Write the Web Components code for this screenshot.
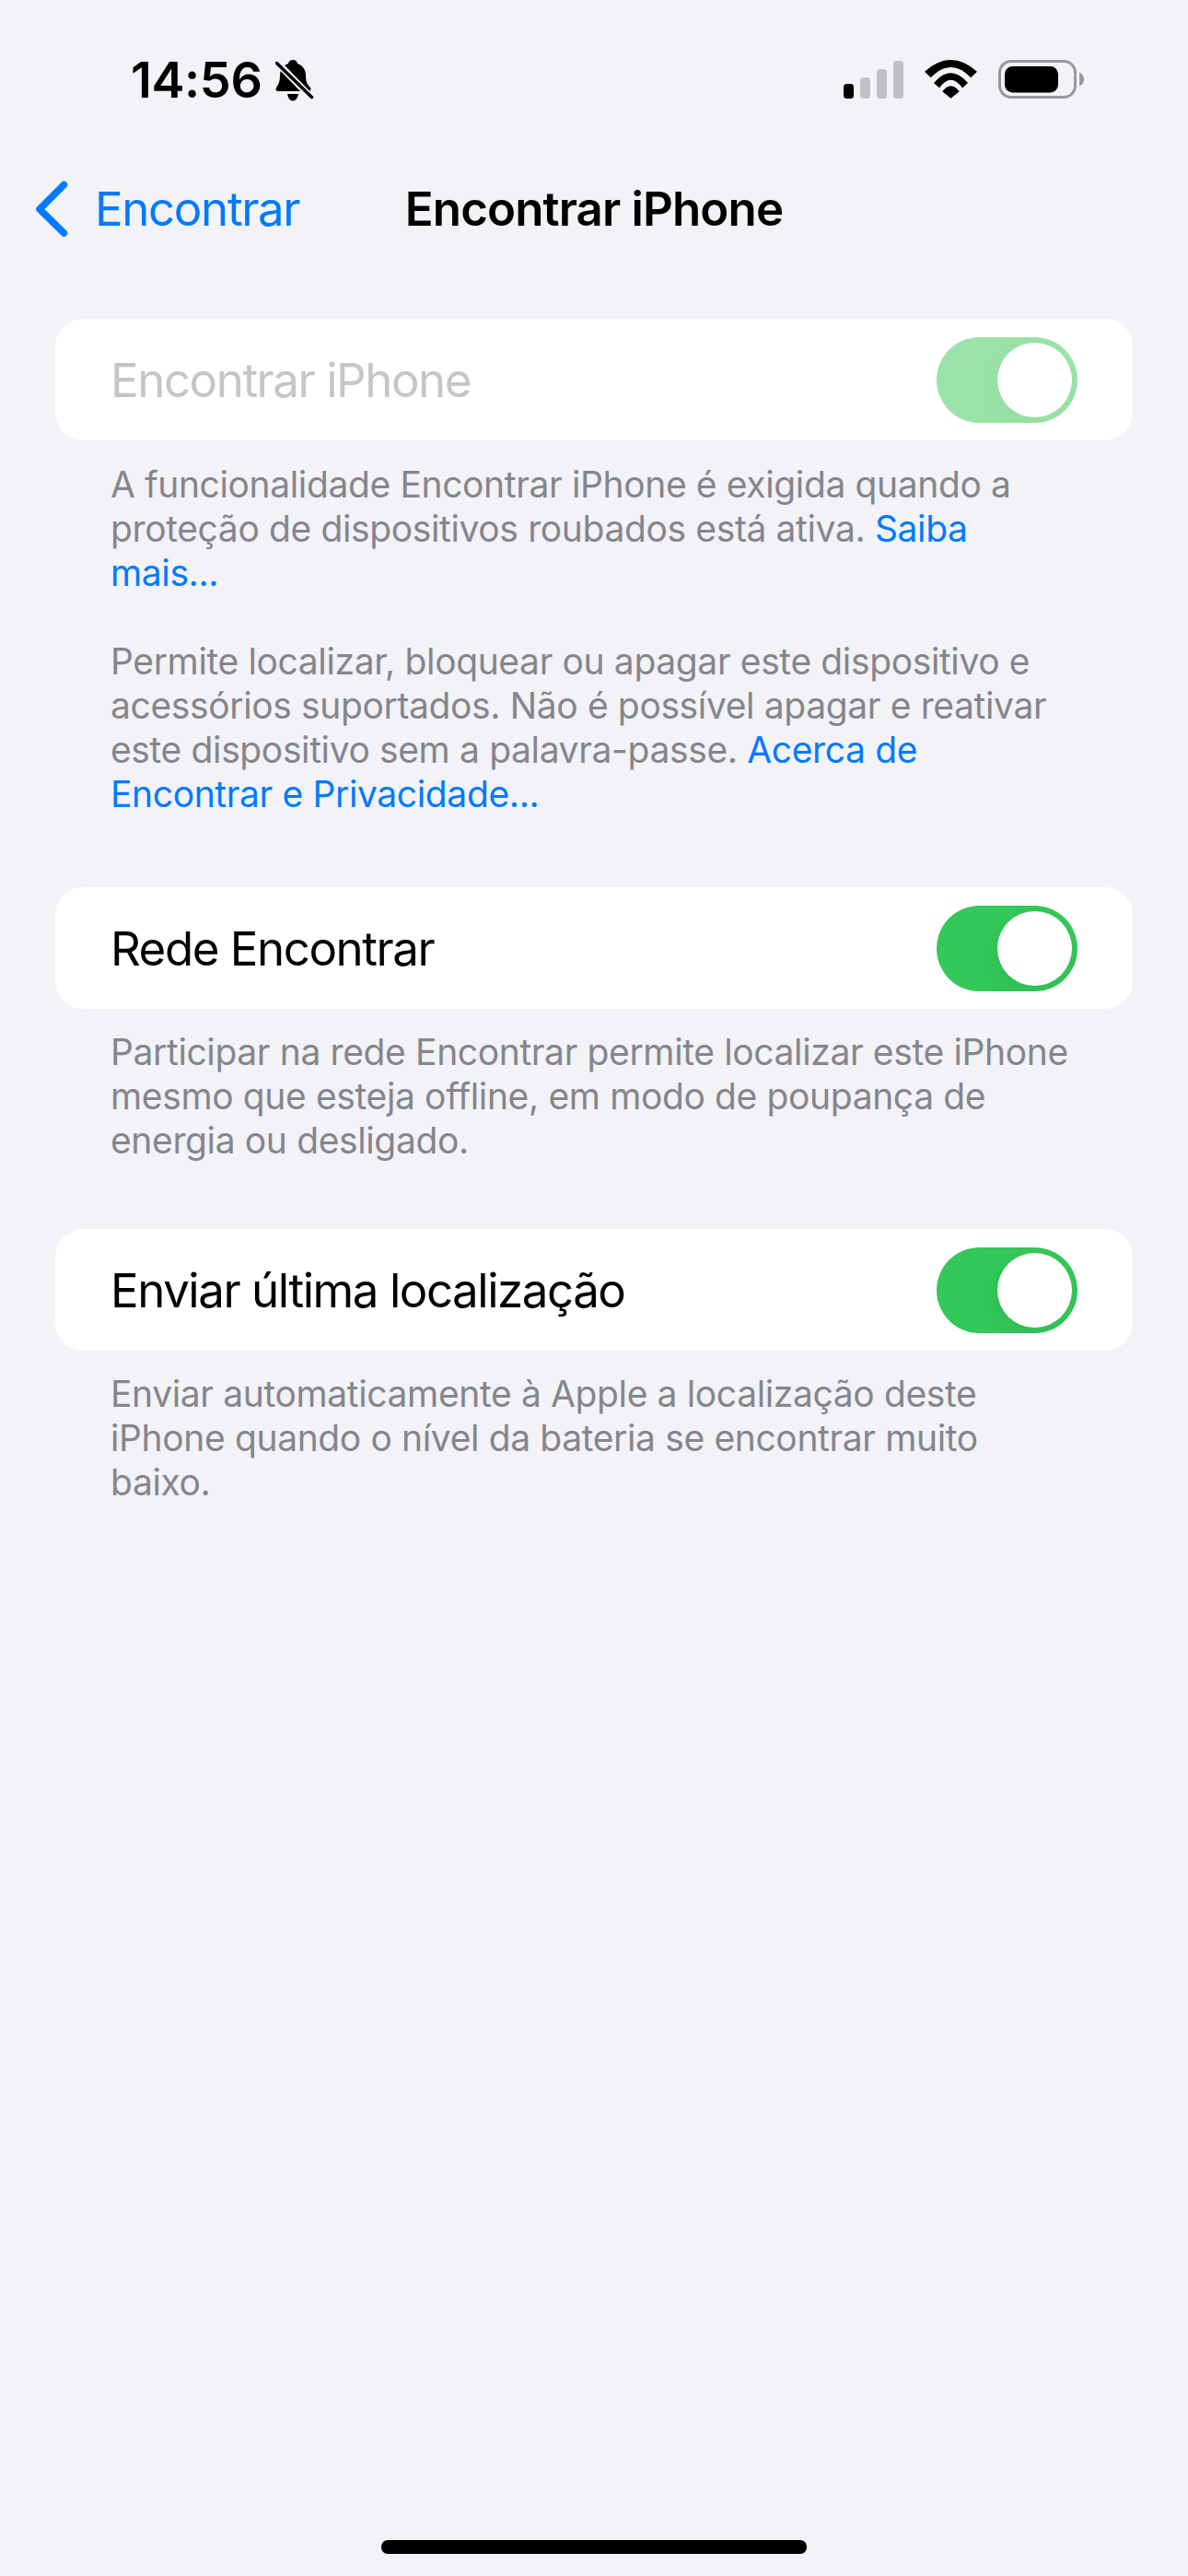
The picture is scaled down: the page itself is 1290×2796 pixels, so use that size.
<!DOCTYPE html>
<html lang="pt"><head><meta charset="utf-8"><title>Encontrar iPhone</title>
<style>
html,body{margin:0;padding:0;background:#f2f2f7}
body{width:1290px;height:2796px;overflow:hidden;font-family:Inter,"Liberation Sans",sans-serif}
</style></head><body>
<phone-app>
  <status-bar></status-bar>
  <nav-bar back="Encontrar" title-text="Encontrar iPhone"></nav-bar>
  <settings-list>
    <settings-group style="--after:77px">
      <settings-row label="Encontrar iPhone" disabled></settings-row>
      <p>A funcionalidade Encontrar iPhone é exigida quando a<br>proteção de dispositivos roubados está ativa. <info-link>Saiba</info-link><br><info-link>mais...</info-link></p>
      <p>Permite localizar, bloquear ou apagar este dispositivo e<br>acessórios suportados. Não é possível apagar e reativar<br>este dispositivo sem a palavra-passe. <info-link>Acerca de</info-link><br><info-link>Encontrar e Privacidade...</info-link></p>
    </settings-group>
    <settings-group style="--after:72px;--gap:23px">
      <settings-row label="Rede Encontrar"></settings-row>
      <p>Participar na rede Encontrar permite localizar este iPhone<br>mesmo que esteja offline, em modo de poupança de<br>energia ou desligado.</p>
    </settings-group>
    <settings-group style="--gap:23px">
      <settings-row label="Enviar última localização"></settings-row>
      <p>Enviar automaticamente à Apple a localização deste<br>iPhone quando o nível da bateria se encontrar muito<br>baixo.</p>
    </settings-group>
  </settings-list>
  <home-indicator></home-indicator>
</phone-app>
<script>
const def=(n,html)=>customElements.define(n,class extends HTMLElement{
  connectedCallback(){ if(this.shadowRoot)return; const r=this.attachShadow({mode:'open'}); r.innerHTML=typeof html==='function'?html(this):html; }
});
def('info-link',`<style>:host{display:inline;color:#007aff}</style><slot></slot>`);
def('status-bar',()=>`<style>
:host{display:flex;height:130px;box-sizing:border-box;padding:62px 113px 0 142px;align-items:flex-start;color:#000}
.t{font:600 54px/50px Inter,sans-serif;letter-spacing:-.4px;height:48px}
svg{display:block}
.bell{margin:3px 0 0 14px}
.sig{margin:4px 0 0 auto}
.wifi{margin:3px 0 0 23px}
.bat{margin:3px 0 0 23px}
</style>
<span class="t">14:56</span>
<svg class="bell" width="42" height="45" viewBox="0 0 42 45"><path d="M19 0c-2.5 0-4.500 1.500-5 4C8 6 5 11 5 17c0 7-2 10-3.500 12.500C0 31 0 33.500 3 34h33c3-.5 3-3 1.500-4.500C35 27 33 24 33 17c0-6-3-11-9-13-.5-2.500-2.500-4-5-4Z"/><path d="M13 37h12c-.7 4.500-3 7.500-6 7.500S13.700 41.500 13 37Z"/><path d="M1 2 40 42" stroke="#f2f2f7" stroke-width="7.500" /><path d="M1.500 3.500 39.500 40.500" stroke="#000" stroke-width="3.500" stroke-linecap="round"/></svg>
<svg class="sig" width="65" height="41" viewBox="0 0 65 41"><rect x="0" y="25" width="11" height="16" rx="3.500"/><g fill="#bfbfc5"><rect x="18" y="18" width="11" height="23" rx="3.500"/><rect x="36" y="9" width="11" height="32" rx="3.500"/><rect x="54" y="0" width="11" height="41" rx="3.500"/></g></svg>
<svg class="wifi" width="57" height="42" viewBox="0 0 57 42"><path d="M0 12.700Q28.500-12.700 57 12.700L50.300 19.300Q28.500-3.300 6.700 19.300Z"/><path d="M10 25Q28.500 3.700 47 25L41 30.500Q28.500 12.900 16 30.500Z"/><path d="M19.300 34.300Q28.500 22.300 37.700 34.300L28.500 41.700Z"/></svg>
<svg class="bat" width="93" height="42" viewBox="0 0 93 42"><rect x="1.500" y="1.500" width="82" height="39" rx="12.500" fill="none" stroke="#98989c" stroke-width="3"/><rect x="7" y="7" width="58" height="28.500" rx="8.500"/><path d="M88 14c3 .5 5 3.500 5 7s-2 6.500-5 7Z" fill="#98989c"/></svg>`);
def('nav-bar',h=>`<style>
:host{display:grid;grid-template-columns:1fr auto 1fr;align-items:center;height:132px;box-sizing:border-box;padding:62px 36px 0;color:#000}
.b{display:flex;align-items:center;gap:28px;color:#007aff;font:400 51px/60px Inter,sans-serif;letter-spacing:-1.35px}
svg{display:block}
.c{font:600 51px/60px Inter,sans-serif;letter-spacing:-.85px}
</style><div class="b"><svg width="39" height="62" viewBox="0 0 39 62"><path d="M33.500 4.500 7 31l26.500 26" fill="none" stroke="#007aff" stroke-width="7.500" stroke-linecap="round" stroke-linejoin="round"/></svg><span>${h.getAttribute('back')}</span></div><div class="c">${h.getAttribute('title-text')}</div><div></div>`);
def('settings-list',`<style>:host{display:block;padding:84px 60px 0}</style><slot></slot>`);
def('settings-group',`<style>
:host{display:block;margin-bottom:var(--after,0)}
.f{padding:var(--gap,24px) 60px 0;color:#85858b;font:400 39px/48px Inter,sans-serif;letter-spacing:-.37px}
::slotted(p){margin:0 0 48px;font:inherit;color:inherit}
::slotted(p:last-child){margin-bottom:0}
</style><slot name="row"></slot><div class="f"><slot></slot></div>`);
def('settings-row',h=>{const d=h.hasAttribute('disabled');return `<style>
:host{display:flex;align-items:center;justify-content:space-between;height:132px;background:#fff;border-radius:30px;padding:0 60px;box-sizing:border-box}
span{font:400 51px/60px Inter,sans-serif;letter-spacing:-1.45px;color:${d?'#c5c5c7':'#000'};padding-top:1px}
</style><span>${h.getAttribute('label')}</span><toggle-switch ${d?'disabled':''}></toggle-switch>`});
def('toggle-switch',h=>`<style>
:host{display:flex;justify-content:flex-end;align-items:center;width:153px;height:93px;box-sizing:border-box;padding-right:6px;border-radius:47px;background:${h.hasAttribute('disabled')?'#9ae3a8':'#34c759'};overflow:hidden}
i{display:block;width:81px;height:81px;border-radius:50%;background:#fff;box-shadow:-3px 9px 24px rgba(0,0,0,${h.hasAttribute('disabled')?'.03':'.06'})}
</style><i></i>`);
def('home-indicator',`<style>:host{display:block;width:462px;height:15px;border-radius:7px;background:#000;margin:auto auto 0}</style>`);
def('phone-app',`<style>:host{display:flex;flex-direction:column;height:2796px;box-sizing:border-box;padding-bottom:24px}</style><slot></slot>`);
document.querySelectorAll('settings-row').forEach(r=>r.slot='row');
</script>
</body></html>
